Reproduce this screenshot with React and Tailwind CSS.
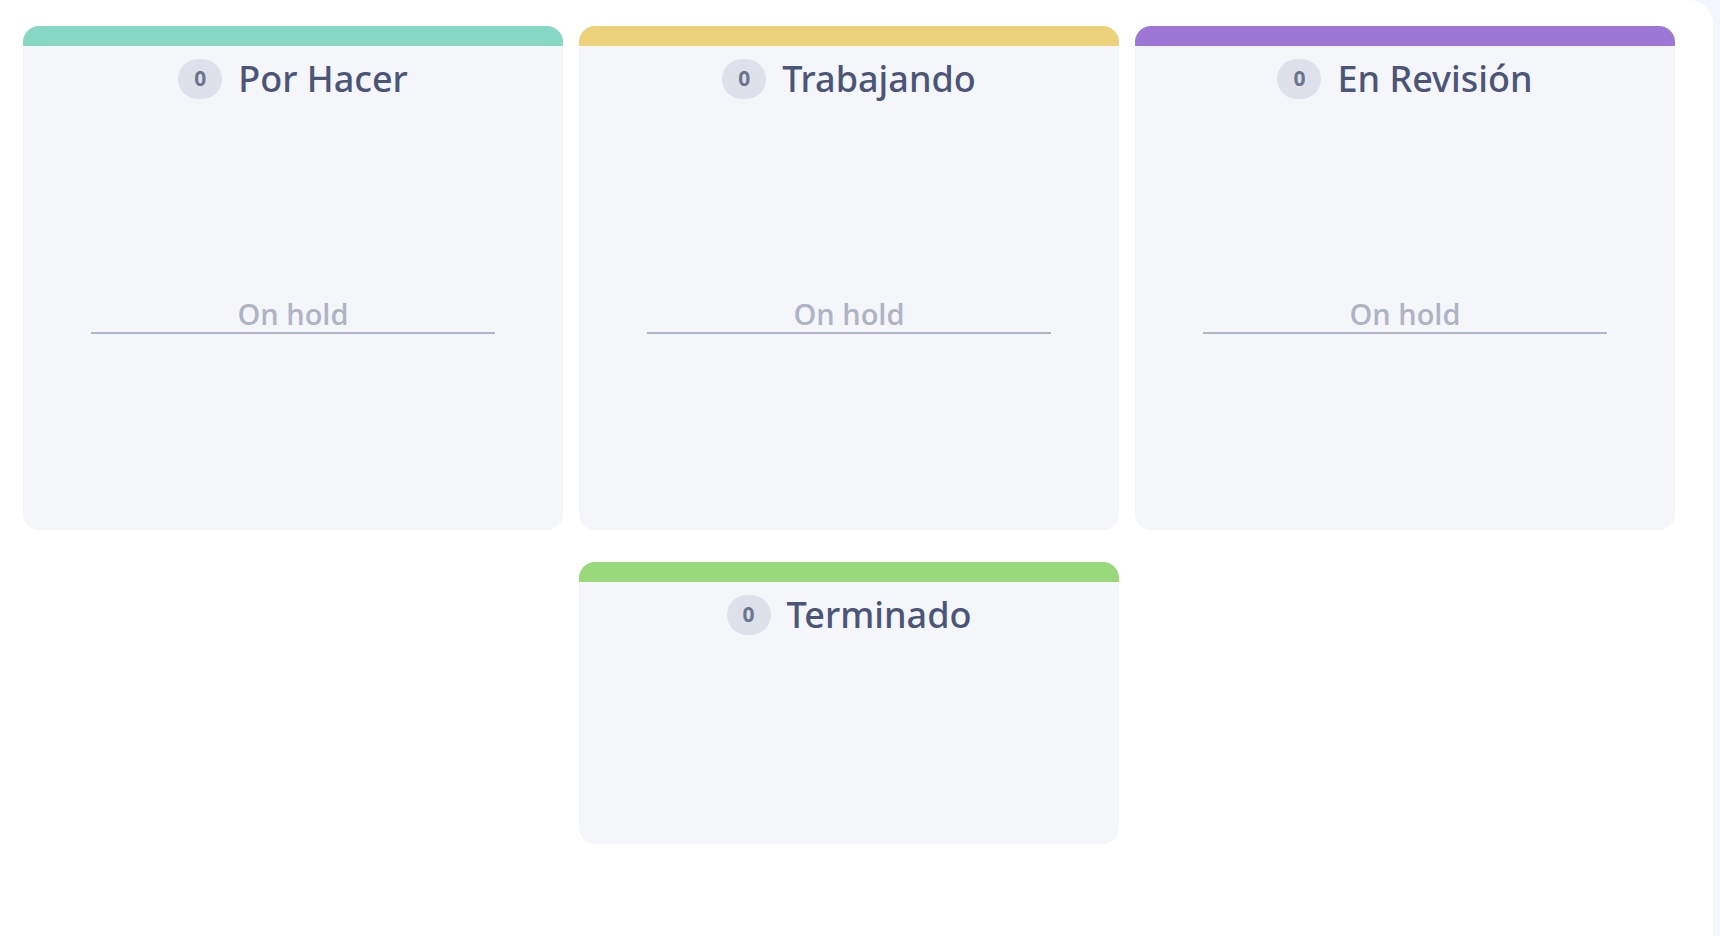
import React from "react";

const font = { fontFamily: '"Open Sans", "Noto Sans", sans-serif' };
const titleFont = { fontFamily: '"Noto Sans", "Open Sans", sans-serif' };

function Header({ title }) {
  return (
    <div className="mt-[13px] flex items-center justify-center gap-4">
      <div className="flex h-10 w-11 items-center justify-center rounded-full bg-[#dfe1ea] text-[21px] font-bold text-[#6b7591]">
        0
      </div>
      <div className="text-[36px] font-medium leading-10 text-[#4a5578]" style={titleFont}>
        {title}
      </div>
    </div>
  );
}

function Card({ title, bar, tall }) {
  return (
    <div
      className={`flex flex-col overflow-hidden rounded-2xl bg-[#f5f6fa] ${tall ? "h-[504px]" : "h-[282px]"}`}
    >
      <div className={`h-5 ${bar}`} />
      <Header title={title} />
      {tall && (
        <div className="mx-auto mt-[197px] w-[404px] border-b-2 border-[#b1b6c6] text-center text-[29px] font-semibold leading-9 text-[#aeb4c5]">
          On hold
        </div>
      )}
    </div>
  );
}

export default function App() {
  return (
    <div className="min-h-[936px] bg-[#f3f6fc]" style={font}>
      <div className="h-[936px] w-[1713px] rounded-tr-[24px] bg-white pl-[23px] pt-[26px]">
        <div className="grid grid-cols-[540px_540px_540px] gap-x-4 gap-y-8">
          <Card title="Por Hacer" bar="bg-[#86d8c4]" tall />
          <Card title="Trabajando" bar="bg-[#edd27c]" tall />
          <Card title="En Revisión" bar="bg-[#9d77d6]" tall />
          <div className="col-start-2">
            <Card title="Terminado" bar="bg-[#9ad97b]" />
          </div>
        </div>
      </div>
    </div>
  );
}
